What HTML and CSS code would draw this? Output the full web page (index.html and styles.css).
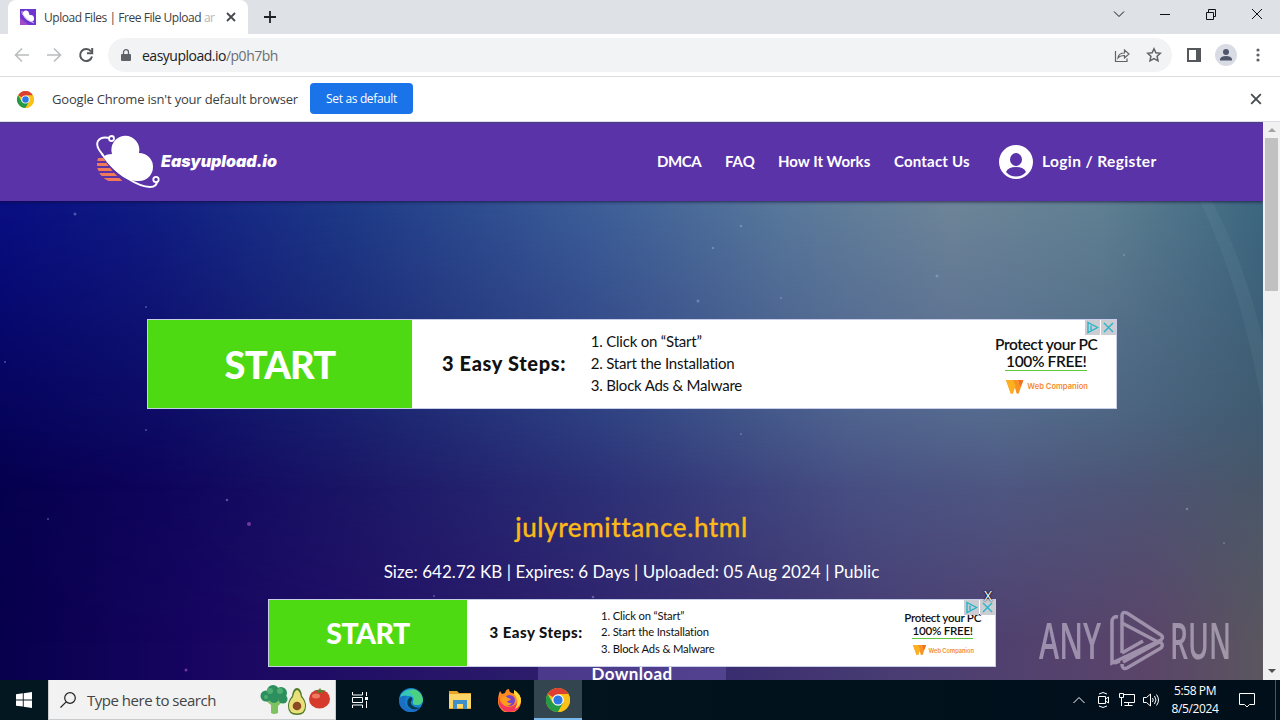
FILE: index.html
```html
<!DOCTYPE html>
<html>
<head>
    <meta charset="UTF-8">
    <title>Upload Files | Free File Upload</title>
    <link rel="stylesheet" href="styles.css">
</head>
<body>
    <svg class="defs">
        <symbol id="chrome" viewBox="0 0 24 24">
            <circle cx="12" cy="12" r="12" fill="#fbc116"/>
            <path d="M12 12L1.6 6A12 12 0 0 1 22.4 6z" fill="#dd4033"/>
            <path d="M1.6 6A12 12 0 0 0 12 24L17.2 15 12 12 6.8 15z" fill="#229a48"/>
            <path d="M12 6H22.4A12 12 0 0 1 12 24L17.2 15z" fill="#fbc116"/>
            <circle cx="12" cy="12" r="5.8" fill="#fff"/>
            <circle cx="12" cy="12" r="4.6" fill="#2c78e4"/>
        </symbol>
        <symbol id="cross" viewBox="0 0 10 10">
            <path d="M1 1L9 9M9 1L1 9" fill="none" stroke="currentColor"/>
        </symbol>
        <symbol id="webc" viewBox="0 0 18 14">
            <path d="M0 0h12l1 3 1-3h4l-5 14h-2L9 7l-2 7H5z" fill="#f7931e"/>
            <path d="M0 0h7l3 6-3 8H5z" fill="#fdb022"/>
            <path d="M12 0h6l-3 7z" fill="#f26f21"/>
        </symbol>
        <clipPath id="sun"><circle cx="19" cy="29" r="18"/></clipPath>
    </svg>

    <div class="tabs">
        <div class="tab">
            <svg class="favicon" viewBox="0 0 16 16"><path fill="#6d35d0" d="M0 0h16v16H0z"/><path fill="#a04cc8" d="M0 9l9 7H0z"/><path fill="#fff" d="M3 5a3 3 0 0 1 6-1q0 2 1 2a3.500 3.500 0 0 1 1 7q-4-1-7-5z"/><path d="M2 2q-1 3 3 6 5 5 9 6" fill="none" stroke="#d9c6f5"/></svg>
            <span class="name">Upload Files | Free File Upload <i>ar</i></span>
            <svg class="close"><use href="#cross"/></svg>
        </div>
        <svg class="plus" viewBox="0 0 12 12"><path d="M6 0v12M0 6h12" stroke="#202124" stroke-width="1.800"/></svg>
        <div class="win">
            <svg viewBox="0 0 12 12"><path d="M1 3.500l5 5 5-5"/></svg>
            <svg viewBox="0 0 12 12"><path d="M1 6.500h10"/></svg>
            <svg viewBox="0 0 12 12"><path d="M1.500 4.500h7v7h-7zM3.500 4V1.500h7v7H9"/></svg>
            <svg viewBox="0 0 12 12"><path d="M1 1l10 10M11 1L1 11"/></svg>
        </div>
    </div>

    <div class="toolbar">
        <svg class="nav off" viewBox="0 0 16 16"><path d="M15 8H2M8 1.500L1.500 8 8 14.500"/></svg>
        <svg class="nav off" viewBox="0 0 16 16"><path d="M1 8h13M8 1.500L14.500 8 8 14.500"/></svg>
        <svg class="nav" viewBox="0 0 16 16"><path d="M13 4.500A6 6 0 1 0 14 9.500M14.200 1v5.200H9"/></svg>
        <div class="address">
            <svg class="lock" viewBox="0 0 10 12"><path fill="#5f6368" d="M1 5h8q1 0 1 1v5q0 1-1 1H1q-1 0-1-1V6q0-1 1-1z"/><path d="M2.500 5V3.200a2.500 2.500 0 0 1 5 0V5" fill="none" stroke="#5f6368" stroke-width="1.300"/></svg>
            <span class="url">easyupload.io<i>/p0h7bh</i></span>
            <svg class="act" viewBox="0 0 16 16"><path d="M1.500 4v10.500h11.500v-3M4 11q.5-5 6.500-5V3L15 7l-4.500 4V8.500Q6 8.500 4 11z"/></svg>
            <svg class="act" viewBox="0 0 16 16"><path stroke-width="1.500" d="M8 1.800l1.900 4 4.500.5-3.300 3 .9 4.500L8 11.600l-4 2.200.9-4.500-3.300-3 4.500-.5z"/></svg>
        </div>
        <svg class="side" viewBox="0 0 14 14"><path d="M1 1h12v12H1z" fill="#fff" stroke="#54585d" stroke-width="2"/><path d="M9 0h5v14H9z" fill="#54585d"/></svg>
        <svg class="user" viewBox="0 0 22 22"><circle cx="11" cy="11" r="11" fill="#dadce5"/><circle cx="11" cy="8" r="3" fill="#4f566b"/><path d="M5 16.500v-1.500q1-3 6-3t6 3v1.500z" fill="#4f566b"/></svg>
        <svg class="dots" viewBox="0 0 4 14"><g fill="#5f6368"><circle cx="2" cy="2" r="1.600"/><circle cx="2" cy="7" r="1.600"/><circle cx="2" cy="12" r="1.600"/></g></svg>
    </div>

    <div class="infobar">
        <svg class="logo"><use href="#chrome"/></svg>
        <span class="msg">Google Chrome isn't your default browser</span>
        <span class="btn">Set as default</span>
        <svg class="close"><use href="#cross"/></svg>
    </div>

    <div class="view">
        <div class="page">
            <div class="sky mid"></div>
            <div class="sky top"></div>
            <svg class="sky" viewBox="0 0 1263 558">
                <path d="M1200 79h12q32 60 51 140v70q-20-120-63-210z" fill="#9fc0cc" opacity=".08"/>
                <g fill="#a9bcec" opacity=".4">
                    <circle cx="75" cy="92" r="1.500"/><circle cx="741" cy="104" r="1.300"/><circle cx="713" cy="126" r="1.200"/>
                    <circle cx="937" cy="154" r="1.500"/><circle cx="698" cy="179" r="1.500"/><circle cx="781" cy="176" r="1"/>
                    <circle cx="1124" cy="133" r="1"/><circle cx="146" cy="185" r="1"/><circle cx="146" cy="308" r="1"/>
                    <circle cx="227" cy="378" r="1.300"/><circle cx="741" cy="312" r="1"/><circle cx="1187" cy="387" r="1.300"/>
                    <circle cx="434" cy="474" r="1"/><circle cx="593" cy="475" r="1.300"/><circle cx="1224" cy="421" r="1"/>
                    <circle cx="5" cy="240" r="1"/><circle cx="48" cy="397" r="1"/>
                </g>
                <g fill="#8a45a8" opacity=".8"><circle cx="249" cy="402" r="2"/><circle cx="186" cy="548" r="1.500"/></g>
            </svg>

            <div class="header">
                <svg class="cloud" viewBox="0 0 64 54">
                    <path d="M0 24.500h40M0 29.500h40M0 34.500h40M0 39.500h40M0 44.500h40" stroke="#f07a5a" stroke-width="3" clip-path="url(#sun)"/>
                    <path d="M7 18L46 49H30Q14 36 7 22z" fill="#5a33a9"/>
                    <path d="M7 20Q-1 11 2 6q3-5 12-3" fill="none" stroke="#fff" stroke-width="1.900"/>
                    <path d="M8 21q3-2 8-2a14 14 0 1 1 27 -1 13.800 13.800 0 0 1 0 28Q32 47 22 38 12 30 8 21z" fill="#fff"/>
                    <path d="M6 19q10 15 25 24 14 9 23 9 7 0 7-6" fill="none" stroke="#fff" stroke-width="2"/>
                    <g fill="#5a33a9" stroke="#fff" stroke-width="1.800"><circle cx="15.500" cy="3.500" r="2.500"/><circle cx="60" cy="44.500" r="2.700"/></g>
                </svg>
                <span class="brand">Easyupload.io</span>
                <ul class="menu">
                    <li class="m1">DMCA</li>
                    <li class="m2">FAQ</li>
                    <li class="m3">How It Works</li>
                    <li class="m4">Contact Us</li>
                </ul>
                <svg class="avatar" viewBox="0 0 34 34"><circle cx="17" cy="17" r="17" fill="#fff"/><ellipse cx="17" cy="14.500" rx="6" ry="6.500" fill="#5a33a9"/><path d="M7 27q2-5 10-5t10 5q-4 4.500-10 4.500T7 27z" fill="#5a33a9"/></svg>
                <span class="login">Login / Register</span>
            </div>

            <div class="ad">
                <div class="start">START</div>
                <div class="steps">3 Easy Steps:</div>
                <ol>
                    <li>1. Click on “Start”</li>
                    <li>2. Start the Installation</li>
                    <li>3. Block Ads &amp; Malware</li>
                </ol>
                <div class="promo">
                    <p class="a">Protect your PC</p>
                    <p class="b">100% FREE!</p>
                    <p class="c"><svg><use href="#webc"/></svg>Web Companion</p>
                </div>
                <div class="choices">
                    <svg viewBox="0 0 15 15"><path d="M3 2.500l9.500 5L3 12.500zM6 5.500v4.500"/></svg>
                    <svg viewBox="0 0 15 15"><path d="M3 3l9 9M12 3l-9 9"/></svg>
                </div>
            </div>

            <h1>julyremittance.html</h1>
            <p class="info">Size: 642.72 KB | Expires: 6 Days | Uploaded: 05 Aug 2024 | Public</p>
            <div class="download">Download</div>

            <div class="ad small">
                <div class="start">START</div>
                <div class="steps">3 Easy Steps:</div>
                <ol>
                    <li>1. Click on “Start”</li>
                    <li>2. Start the Installation</li>
                    <li>3. Block Ads &amp; Malware</li>
                </ol>
                <div class="promo">
                    <p class="a">Protect your PC</p>
                    <p class="b">100% FREE!</p>
                    <p class="c"><svg><use href="#webc"/></svg>Web Companion</p>
                </div>
                <div class="choices">
                    <svg viewBox="0 0 15 15"><path d="M3 2.500l9.500 5L3 12.500zM6 5.500v4.500"/></svg>
                    <svg viewBox="0 0 15 15"><path d="M3 3l9 9M12 3l-9 9"/></svg>
                </div>
                <span class="x">X</span>
            </div>

            <svg class="anyrun" viewBox="0 0 192 62">
                <text x="0" y="49" textLength="62" lengthAdjust="spacingAndGlyphs">ANY</text>
                <text x="131" y="49" textLength="61" lengthAdjust="spacingAndGlyphs">RUN</text>
                <path d="M79 7q-6-1-6 5v41l49-23q3-3 0-5L88 3q-5-2-5 3v37M83 13l38 20M84 52l38-21M83 43l21-12M75 53l6-2M83 54q0 6 5 4l34-20q3-4-1-6"/>
            </svg>
        </div>
        <div class="scroll">
            <svg viewBox="0 0 8 4"><path d="M0 4l4-4 4 4z" fill="#a3a3a3"/></svg>
            <div class="thumb"></div>
            <svg viewBox="0 0 8 4"><path d="M0 0l4 4 4-4z" fill="#505050"/></svg>
        </div>
    </div>

    <div class="taskbar">
        <div class="cell"><svg class="i16" viewBox="0 0 16 16"><path fill="#fff" d="M0 2.300l6.800-1v6.200H0zM7.700 1.200L16 0v7.500H7.700zM0 8.400h6.800v6.200L0 13.700zM7.700 8.400H16V16l-8.300-1.200z"/></svg></div>
        <div class="search">
            <svg class="glass" viewBox="0 0 16 16"><circle cx="10" cy="6" r="5.300"/><path d="M6.200 9.800L.5 15.500"/></svg>
            <span>Type here to search</span>
            <svg class="veg" viewBox="0 0 70 30">
                <path d="M10 14h9q0 3 4 2l-5 5v7q-4 2-7 0v-8l-5-4z" fill="#7fc262"/>
                <g fill="#2c8f5d"><circle cx="6" cy="11" r="5.500"/><circle cx="13" cy="6" r="6"/><circle cx="21" cy="8" r="6"/><circle cx="23" cy="14" r="4.500"/><circle cx="14" cy="13" r="5"/></g>
                <g fill="#4fae72"><circle cx="10" cy="6" r="3"/><circle cx="20" cy="6" r="3"/><circle cx="6" cy="12" r="2"/></g>
                <path d="M37 3q4 0 5 8 4 5 4 10 0 9-9 9t-9-9q0-5 4-10 1-8 5-8z" fill="#4e7a28"/>
                <path d="M37 5q3 1 4 7 4 4 4 9 0 7.500-8 7.500t-8-7.500q0-5 4-9 1-6 4-7z" fill="#e9e07a"/>
                <circle cx="37" cy="21" r="4.300" fill="#8a4b22"/>
                <ellipse cx="59.500" cy="14" rx="10.500" ry="9.500" fill="#d63a2c"/>
                <ellipse cx="56" cy="11" rx="4" ry="2.500" fill="#ef7a62"/>
                <path d="M54 5l5 .5 1-3 1 3 5 0-4 1.500 1 2-3-2-4 1.500 2-2z" fill="#3f8c35"/>
            </svg>
        </div>
        <div class="cell"><svg class="i16 line" viewBox="0 0 16 16"><path d="M.5 0v3h10V0M.5 5.500h10v5H.5zM.5 16v-3h10v3M14.500 0v4M14.500 9v7"/><path d="M13 5h3v3h-3z" fill="#fff" stroke="none"/></svg></div>
        <div class="cell"><svg class="i24" viewBox="0 0 24 24">
            <circle cx="12" cy="12" r="12" fill="#1483d0"/>
            <path d="M1 9A12 12 0 0 1 24 11q0 6-6 6-5 0-4-3 2-6-4-6-6-1-9 1z" fill="#37c6b5"/>
            <path d="M14 1a12 12 0 0 1 10 11q-1 5-6 5-5 0-4-3 3-7-4-10z" fill="#55d36f" opacity=".75"/>
            <path d="M0 12q2-5 8-4-4 6 0 11 5 5 13 1-4 5-11 4Q0 22 0 12z" fill="#1b6fc4"/>
            <path d="M11 9q-5 5-1 10 5 5 12 0-4 2-8-1-4-3-1-6 1-2-2-3z" fill="#08384f"/>
        </svg></div>
        <div class="cell"><svg class="i22" viewBox="0 0 22 20"><path d="M0 1h8l2 2h12v16H0z" fill="#e9a526"/><path d="M0 4h22v14H0z" fill="#fcd667"/><path d="M4 19v-9h14v9h-4v-5H8v5z" fill="#3f8fc9"/><path d="M8 14h6v3H8z" fill="#fcd667"/></svg></div>
        <div class="cell"><svg class="i24" viewBox="0 0 24 24">
            <path d="M3 3l2 3 3-1q1-4 4-4 0 3 3 4l3 1-1-4q7 4 7 11a11 11 0 0 1-23 1Q1 7 3 3z" fill="#ff8a22"/>
            <path d="M2 8q0 9 9 11 9 0 11-9 4 14-11 14Q0 22 2 8z" fill="#f4375b"/>
            <path d="M17 2q7 4 7 11-1 6-6 8 5-9-1-15z" fill="#ffd93b"/>
            <circle cx="12.500" cy="12.500" r="5.500" fill="#7743c9"/>
            <path d="M5 9q4-2 6 1l3 1q-1 2-4 2 1 3 5 2-3 4-7 2-4-2-3-8z" fill="#ff9c1f"/>
        </svg></div>
        <div class="cell on"><svg class="i24"><use href="#chrome"/></svg></div>

        <div class="tray">
            <svg class="i16 line" viewBox="0 0 16 16"><path d="M2.500 11L8 5.500l5.500 5.500"/></svg>
            <svg class="i16 line" viewBox="0 0 16 16"><path d="M3.500 4.500h7v7h-7zM10.500 7l3-2v6l-3-2M4 2q4-3 8 0M4 14q4 3 8 0"/></svg>
            <svg class="i16 line" viewBox="0 0 16 16"><path d="M5 2.500h10.500v8H5M.5 1.500h4v4h-4zM2.500 5.500V14M9.500 10.500v3M5.500 13.500h8"/></svg>
            <svg class="i16 line" viewBox="0 0 16 16"><path d="M.5 5.500h3l4-3.500v12l-4-3.500h-3zM9.500 6q1.500 2 0 4M11.500 4q3 4 0 8M13.500 2.500q4 5.500 0 11"/></svg>
        </div>
        <div class="clock"><p>5:58 PM</p><p>8/5/2024</p></div>
        <svg class="note line" viewBox="0 0 16 16"><path d="M.5 1.500h15v11h-5L8 15l-2.500-2.500h-5z"/></svg>
        <div class="desk"></div>
    </div>
</body>
</html>
```

FILE: styles.css
```css
body,p,h1,ul,ol,li{margin:0;padding:0;list-style:none;}
i{font-style:normal;}
svg{display:block;flex:none;}
body{
    display: flex;
    flex-direction: column;
    width: 1280px;
    height: 720px;
    overflow: hidden;
    font-family: "Open Sans","Noto Sans",sans-serif;
    white-space: nowrap;
}
.defs{
    position: absolute;
    width: 0;
    height: 0;
}

/* browser */
.tabs{
    display: flex;
    align-items: center;
    height: 34px;
    background: #dee1e6;
}
.tab{
    display: flex;
    align-items: center;
    box-sizing: border-box;
    width: 240px;
    height: 34px;
    margin-left: 8px;
    padding: 0 12px;
    border-radius: 8px 8px 0 0;
    background: #fff;
}
.favicon{
    width: 16px;
    height: 16px;
}
.tab .name{
    width: 172px;
    margin-left: 8px;
    font-size: 12px;
    letter-spacing: -.45px;
    color: #3c4043;
}
.tab .name i{color: #b5b7ba;}
.close{
    width: 10px;
    height: 10px;
    color: #45494d;
    stroke-width: 1.8;
}
.tab .close{margin-left: 11px;}
.plus{
    width: 12px;
    height: 12px;
    margin-left: 16px;
}
.win{
    display: flex;
    gap: 34px;
    margin: -6px 17px 0 auto;
}
.win svg{
    width: 12px;
    height: 12px;
    fill: none;
    stroke: #111;
}
.toolbar{
    display: flex;
    align-items: center;
    height: 42px;
    border-bottom: 1px solid #dadce0;
    background: #fff;
}
.nav{
    width: 16px;
    height: 16px;
    margin-left: 14px;
    margin-right: 2px;
    fill: none;
    stroke: #54585d;
    stroke-width: 2;
}
.nav.off{
    stroke: #babcbe;
    stroke-width: 1.6;
}
.nav + .nav{margin-left: 14px;}
.address{
    display: flex;
    align-items: center;
    box-sizing: border-box;
    width: 1064px;
    height: 34px;
    margin-left: 12px;
    padding: 0 10px 0 13px;
    border-radius: 17px;
    background: #f1f3f4;
}
.lock{
    width: 10px;
    height: 12px;
}
.url{
    margin: 0 auto 0 11px;
    font-size: 14px;
    letter-spacing: -.5px;
    color: #202124;
}
.url i{color: #6b6f74;}
.act{
    width: 16px;
    height: 16px;
    margin-left: 16px;
    fill: none;
    stroke: #5f6368;
    stroke-width: 1.2;
}
.side{
    width: 14px;
    height: 14px;
    margin-left: 15px;
}
.user{
    width: 22px;
    height: 22px;
    margin-left: 14px;
}
.dots{
    width: 4px;
    height: 14px;
    margin-left: 19px;
}
.infobar{
    display: flex;
    align-items: center;
    height: 44px;
    border-bottom: 1px solid #dcdce6;
    background: #fff;
}
.infobar .logo{
    width: 17px;
    height: 17px;
    margin-left: 17px;
}
.infobar .msg{
    width: 258px;
    margin-left: 18px;
    font-size: 13px;
    letter-spacing: -.19px;
    color: #3c4043;
}
.infobar .btn{
    width: 103px;
    height: 31px;
    margin-top: -1px;
    border-radius: 4px;
    background: #1a73e8;
    font-size: 12px;
    line-height: 31px;
    letter-spacing: -.35px;
    text-align: center;
    color: #fff;
}
.infobar .close{
    width: 12px;
    height: 12px;
    margin: 0 18px 0 auto;
    stroke-width: 1.5;
}

/* page */
.view{
    display: flex;
    height: 558px;
}
.page{
    position: relative;
    z-index: 0;
    width: 1263px;
    height: 558px;
    overflow: hidden;
    background: linear-gradient(90deg,#07004c,#170561 200px,#241267 400px,#33256e 640px,#493d73 900px,#5b4569 1150px,#5a565f);
}
.sky{
    position: absolute;
    z-index: -1;
    left: 0;
    top: 0;
    width: 1263px;
    height: 558px;
}
/* colour bands that fade into the one below */
.mid{
    background: linear-gradient(90deg,#05004e,#0c055b 160px,#171765 340px,#2a367a 600px,#48598a 850px,#4d618a 1000px,#42576c);
    -webkit-mask-image: linear-gradient(#000 290px,transparent 520px);
    mask-image: linear-gradient(#000 290px,transparent 520px);
}
.top{
    background: linear-gradient(90deg,#080d82,#101c82 150px,#1e3a87 350px,#3d5e98 600px,#57779a 780px,#6d8498 950px,#5f7f92 1100px,#3b667f);
    -webkit-mask-image: linear-gradient(#000 85px,transparent 370px);
    mask-image: linear-gradient(#000 85px,transparent 370px);
}
.header{
    position: relative;
    display: flex;
    align-items: center;
    height: 79px;
    padding-left: 96px;
    background: #5a33a9;
    box-shadow: inset 0 2px 2px -1px #4b4280, 0 1px 3px rgba(20,10,50,.7);
    color: #fff;
}
.cloud{
    width: 64px;
    height: 54px;
}
.brand{
    width: 496px;
    margin: -2px 0 0 1px;
    font: italic 900 16px Inter,sans-serif;
    letter-spacing: -.05px;
}
.menu{
    display: flex;
    gap: 24px;
    margin-right: 29px;
}
.menu,.login{
    margin-top: -2px;
    font: 700 15px Lato,sans-serif;
}
.m1{
    width: 44px;
    letter-spacing: -.4px;
}
.m2{width: 29px;}
.m3{width: 92px;}
.m4{
    width: 76px;
    letter-spacing: .2px;
}
.avatar{
    width: 34px;
    height: 34px;
}
.login{
    margin-left: 9px;
    font-size: 15.5px;
    letter-spacing: .38px;
}
.ad{
    position: relative;
    display: flex;
    align-items: center;
    box-sizing: border-box;
    width: 97em;
    height: 9em;
    margin: 118px 0 0 147px;
    border: 1px solid #c8cdea;
    background: #fff;
    font-family: Lato,sans-serif;
    font-size: 10px;
    color: #111;
}
.ad .start{
    width: 6.947em;
    height: 100%;
    background: #4eda12;
    font-size: 3.8em;
    font-weight: 900;
    line-height: 2.33em;
    letter-spacing: -.02em;
    text-align: center;
    color: #fff;
}
.ad .steps{
    width: 7.4em;
    margin: -.1em 0 0 1.5em;
    font-size: 2em;
    font-weight: 900;
    letter-spacing: .032em;
}
.ad ol{
    width: 26.9em;
    margin-top: -.2em;
    padding-left: .05em;
    font-size: 1.5em;
    line-height: 1.467em;
    letter-spacing: -.014em;
}
.small ol{margin-top: -.05em;}
.ad .promo{
    width: 10.4em;
    text-align: center;
}
.ad .a,.ad .b{
    font-size: 1.55em;
    line-height: 1.16em;
    letter-spacing: -.025em;
    font-weight: 600;
}
.ad .b{
    width: 5.3em;
    margin: 0 auto;
    border-bottom: 1px solid #5cc83a;
}
.ad .c{
    display: flex;
    align-items: center;
    justify-content: center;
    gap: .5em;
    margin-top: 1.1em;
    padding-left: .2em;
    font: 600 .76em Inter,sans-serif;
    color: #f58a2c;
}
.ad .c svg{
    width: 2.3em;
    height: 1.8em;
}
.choices{
    position: absolute;
    right: 0;
    top: 0;
    display: flex;
    gap: 1px;
}
.choices svg{
    width: 15px;
    height: 15px;
    background: #cbcdd2;
    fill: none;
    stroke: #27b3c8;
    stroke-width: 1.4;
}
h1{
    margin-top: 102px;
    text-align: center;
    font: 500 26px/32px Lato,sans-serif;
    letter-spacing: .6px;
    -webkit-text-stroke: .3px #fbb917;
    color: #fbb917;
}
.info{
    margin-top: 17px;
    text-align: center;
    font: 17px/24px Lato,sans-serif;
    letter-spacing: .03px;
    color: #fff;
}
.download{
    width: 188px;
    height: 60px;
    margin: 76px 0 0 538px;
    background: rgba(120,100,190,.4);
    text-align: center;
    font: 700 17px/27px Lato,sans-serif;
    letter-spacing: .4px;
    color: #fff;
}
.ad.small{
    position: absolute;
    left: 268px;
    top: 477px;
    width: 728px;
    height: 68px;
    margin: 0;
    font-size: 7.5px;
}
.ad .x{
    position: absolute;
    right: 3px;
    top: -14px;
    font: 14px "Open Sans",sans-serif;
    color: #fff;
    text-shadow: 0 0 1px #000, 0 0 2px #000;
}
.anyrun{
    position: absolute;
    left: 1039px;
    top: 488px;
    width: 192px;
    height: 62px;
    opacity: .5;
    font: 600 50px "Open Sans",sans-serif;
    fill: #e4dced;
}
.anyrun path{
    fill: none;
    stroke: #e4dced;
    stroke-width: 3.5;
}
.scroll{
    display: flex;
    flex-direction: column;
    align-items: center;
    width: 17px;
    background: #f1f1f1;
}
.scroll svg{
    width: 8px;
    height: 4px;
    margin-top: 6px;
}
.scroll svg:last-child{margin: auto 0 7px;}
.thumb{
    width: 13px;
    height: 153px;
    margin-top: 6px;
    background: #c1c1c1;
}

/* windows taskbar */
.taskbar{
    display: flex;
    align-items: center;
    height: 40px;
    background: linear-gradient(90deg,#021720,#010f1b);
}
.cell{
    display: flex;
    align-items: center;
    justify-content: center;
    width: 48px;
    height: 40px;
    margin-right: 1px;
}
.cell:first-child{margin-right: 0;}
.search + .cell{margin-right: 3px;}
.cell.on{
    box-sizing: border-box;
    padding-top: 2px;
    border-bottom: 2px solid #76b9ed;
    background: #33454f;
}
.i16{
    width: 16px;
    height: 16px;
}
.i22{
    width: 22px;
    height: 20px;
}
.i24{
    width: 24px;
    height: 24px;
}
.line{
    fill: none;
    stroke: #fff;
}
.search{
    display: flex;
    align-items: center;
    box-sizing: border-box;
    width: 288px;
    height: 40px;
    padding: 0 5px 0 11px;
    border: 1px solid #c9cccf;
    border-top: 0;
    background: #f2f2f2;
    font-size: 15px;
    letter-spacing: -.48px;
    color: #444;
}
.glass{
    width: 16px;
    height: 16px;
    margin-right: 11px;
    fill: none;
    stroke: #222;
    stroke-width: 1.2;
}
.veg{
    width: 70px;
    height: 30px;
    margin-left: auto;
}
.tray{
    display: flex;
    gap: 8px;
    margin-left: auto;
}
.clock{
    width: 72px;
    text-align: center;
    font-size: 12px;
    line-height: 18px;
    letter-spacing: -.4px;
    color: #fff;
}
.note{
    width: 16px;
    height: 16px;
    margin: 0 20px 0 8px;
}
.desk{
    width: 4px;
    height: 40px;
    border-left: 1px solid #4a5660;
}
```
